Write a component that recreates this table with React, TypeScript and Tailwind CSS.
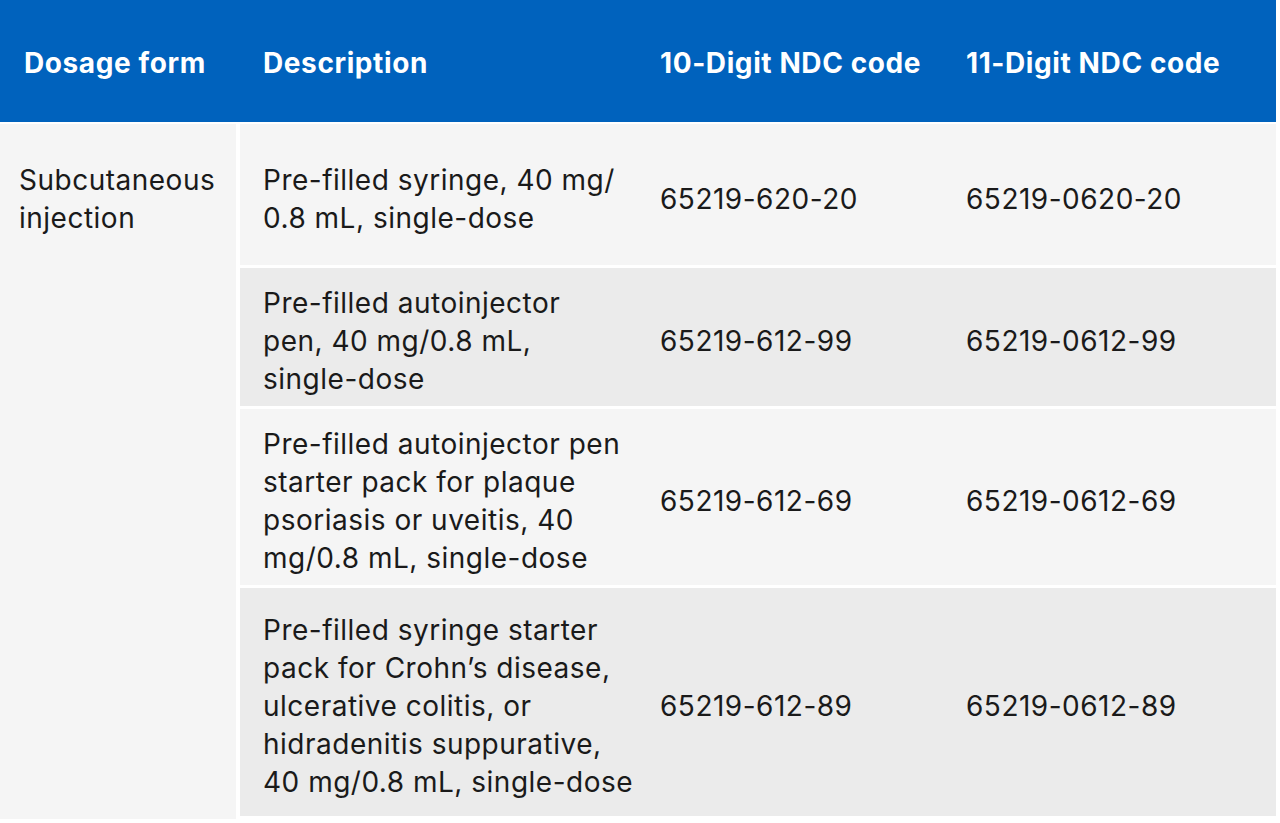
import React from 'react';

const rows = [
  { desc: ['Pre-filled syringe, 40 mg/', '0.8 mL, single-dose'], ndc10: '65219-620-20', ndc11: '65219-0620-20', h: 'h-[141px]', bg: 'bg-[#f5f5f5]' },
  { desc: ['Pre-filled autoinjector', 'pen, 40 mg/0.8 mL,', 'single-dose'], ndc10: '65219-612-99', ndc11: '65219-0612-99', h: 'h-[138px]', bg: 'bg-[#ebebeb]' },
  { desc: ['Pre-filled autoinjector pen', 'starter pack for plaque', 'psoriasis or uveitis, 40', 'mg/0.8 mL, single-dose'], ndc10: '65219-612-69', ndc11: '65219-0612-69', h: 'h-[176px]', bg: 'bg-[#f5f5f5]' },
  { desc: ['Pre-filled syringe starter', 'pack for Crohn’s disease,', 'ulcerative colitis, or', 'hidradenitis suppurative,', '40 mg/0.8 mL, single-dose'], ndc10: '65219-612-89', ndc11: '65219-0612-89', h: 'h-[228px]', bg: 'bg-[#ebebeb]' },
];

const App: React.FC = () => {
  return (
    <div className="w-[1280px] h-[823px] bg-white text-[#1a1a1a] font-['Inter',sans-serif] overflow-hidden">
      {/* header */}
      <div className="h-[122px] w-[1276px] bg-[#0062bd] flex items-center text-white font-bold text-[28px] tracking-[0.6px] pt-[4px]">
        <div className="w-[240px] pl-6">Dosage form</div>
        <div className="w-[397px] pl-[23px]">Description</div>
        <div className="w-[306px] pl-[23px]">10-Digit NDC code</div>
        <div className="w-[333px] pl-[23px]">11-Digit NDC code</div>
      </div>

      {/* body */}
      <div className="flex mt-[2px] w-[1276px] text-[28px] leading-[38px] tracking-[0.5px]">
        <div className="w-[236px] h-[695px] bg-[#f5f5f5] pl-[19px] pt-[37px]">
          <p>Subcutaneous</p>
          <p>injection</p>
        </div>
        <div className="ml-[4px] flex-1 flex flex-col gap-[3px]">
          {rows.map((r) => (
            <div key={r.ndc10} className={`flex items-center pt-[8px] ${r.h} ${r.bg}`}>
              <div className="w-[397px] pl-[23px]">
                {r.desc.map((l) => (
                  <p key={l}>{l}</p>
                ))}
              </div>
              <div className="w-[306px] pl-[23px]">{r.ndc10}</div>
              <div className="pl-[23px]">{r.ndc11}</div>
            </div>
          ))}
        </div>
      </div>
    </div>
  );
};

export default App;
